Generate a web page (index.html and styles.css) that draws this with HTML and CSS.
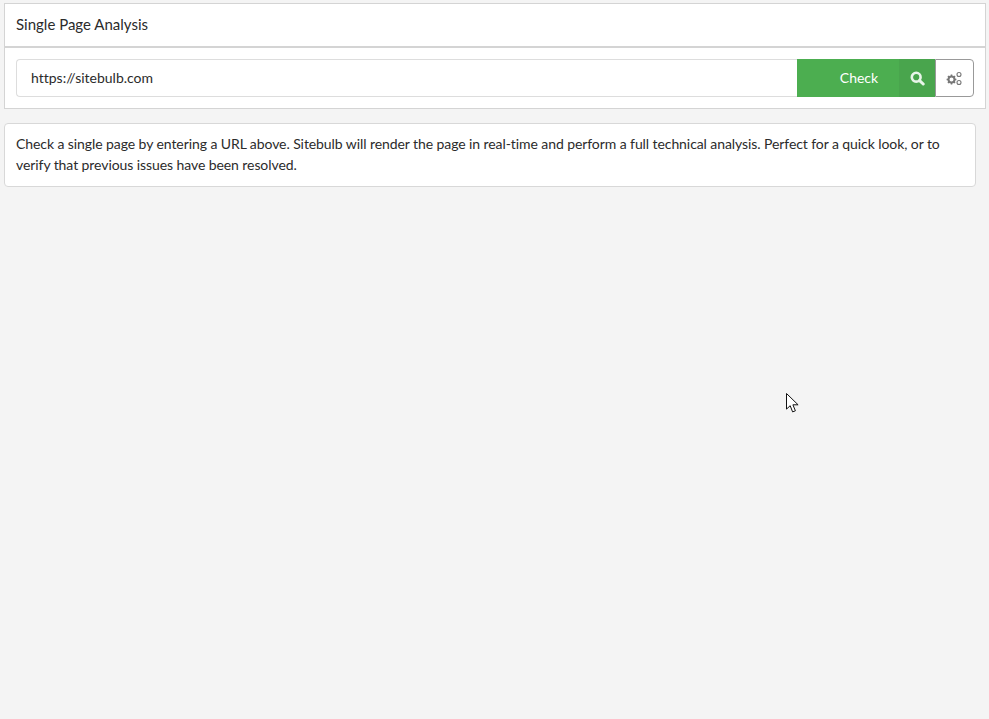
FILE: index.html
```html
<!DOCTYPE html>
<html lang="en">
<head>
<meta charset="utf-8">
<title>Single Page Analysis</title>
<link rel="stylesheet" href="styles.css">
</head>
<body>
<section class="panel">
  <header class="panel-head">Single Page Analysis</header>
  <div class="panel-body">
    <div class="url-input">https://sitebulb.com</div>
    <button class="btn-check">Check</button>
    <button class="btn-search" aria-label="Search">
      <svg width="15" height="15" viewBox="0 0 15 15"><circle cx="6.2" cy="6.2" r="4.4" fill="none" stroke="#e8f5e9" stroke-width="2.6"/><path d="M9.6 9.6l3.6 3.4" stroke="#e8f5e9" stroke-width="3" stroke-linecap="round"/></svg>
    </button>
    <button class="btn-settings" aria-label="Settings">
      <svg class="gears" width="16" height="15" viewBox="0 0 16 15"><g fill="none" stroke="#777"><circle cx="5.5" cy="8.5" r="3" stroke-width="2"/><path d="M5.5 3.6v1.6M5.5 11.8v1.6M.6 8.5h1.6M8.8 8.5h1.6M2 5l1.2 1.2M7.8 10.8L9 12M2 12l1.2-1.2M7.8 6.2L9 5" stroke-width="1.6"/><circle cx="13" cy="3.5" r="2" stroke-width="1.1"/><circle cx="13" cy="11.5" r="2" stroke-width="1.1"/></g></svg>
    </button>
  </div>
</section>
<section class="info-card">Check a single page by entering a URL above. Sitebulb will render the page in real-time and perform a full technical analysis. Perfect for a quick look, or to verify that previous issues have been resolved.</section>
<svg class="cursor" width="13" height="21" viewBox="0 0 13 21"><path d="M.5.5v15.6l3.7-3.4 2.4 6.2 2.8-1.1-2.5-6h5.2z" fill="#fff" stroke="#111" stroke-width="1"/></svg>
</body>
</html>
```
FILE: styles.css
```css
* { box-sizing: border-box; }
html, body { height: 100%; }
body {
  margin: 0;
  padding: 3px 4px 0;
  background: #f4f4f4;
  color: #2b2b2b;
  font-family: Lato, "Liberation Sans", sans-serif;
  font-size: 14px;
  font-variant-ligatures: none;
  overflow: hidden;
}
.panel {
  width: 982px;
  background: #fff;
  border: 1px solid #d4d4d4;
}
.panel-head {
  height: 44px;
  padding: 0 0 2px 11px;
  display: flex;
  align-items: center;
  font-size: 15px;
  border-bottom: 2px solid #d4d4d4;
}
.panel-body {
  display: flex;
  padding: 11px;
}
.url-input {
  flex: 0 0 781px;
  height: 38px;
  padding: 0 0 2px 14px;
  display: flex;
  align-items: center;
  border: 1px solid #ddd;
  border-right: 0;
  border-radius: 4px 0 0 4px;
}
.btn-check, .btn-search, .btn-settings {
  height: 38px;
  padding: 0;
  display: flex;
  align-items: center;
  justify-content: center;
  font: inherit;
}
.btn-check {
  flex: 0 0 102px;
  padding: 0 0 2px 22px;
  border: 0;
  background: #4cae50;
  color: #fff;
}
.btn-search {
  flex: 0 0 36px;
  border: 0;
  background: #49a54d;
}
.btn-settings {
  flex: 0 0 39px;
  padding-right: 2px;
  background: #fff;
  border: 1px solid #999;
  border-radius: 0 4px 4px 0;
}
.info-card {
  width: 972px;
  height: 64px;
  margin-top: 14px;
  padding: 10px 11px;
  background: #fff;
  border: 1px solid #d8d8d8;
  border-radius: 4px;
  line-height: 20.5px;
  letter-spacing: -0.08px;
}
.cursor {
  position: absolute;
  left: 786px;
  top: 393px;
}
```
